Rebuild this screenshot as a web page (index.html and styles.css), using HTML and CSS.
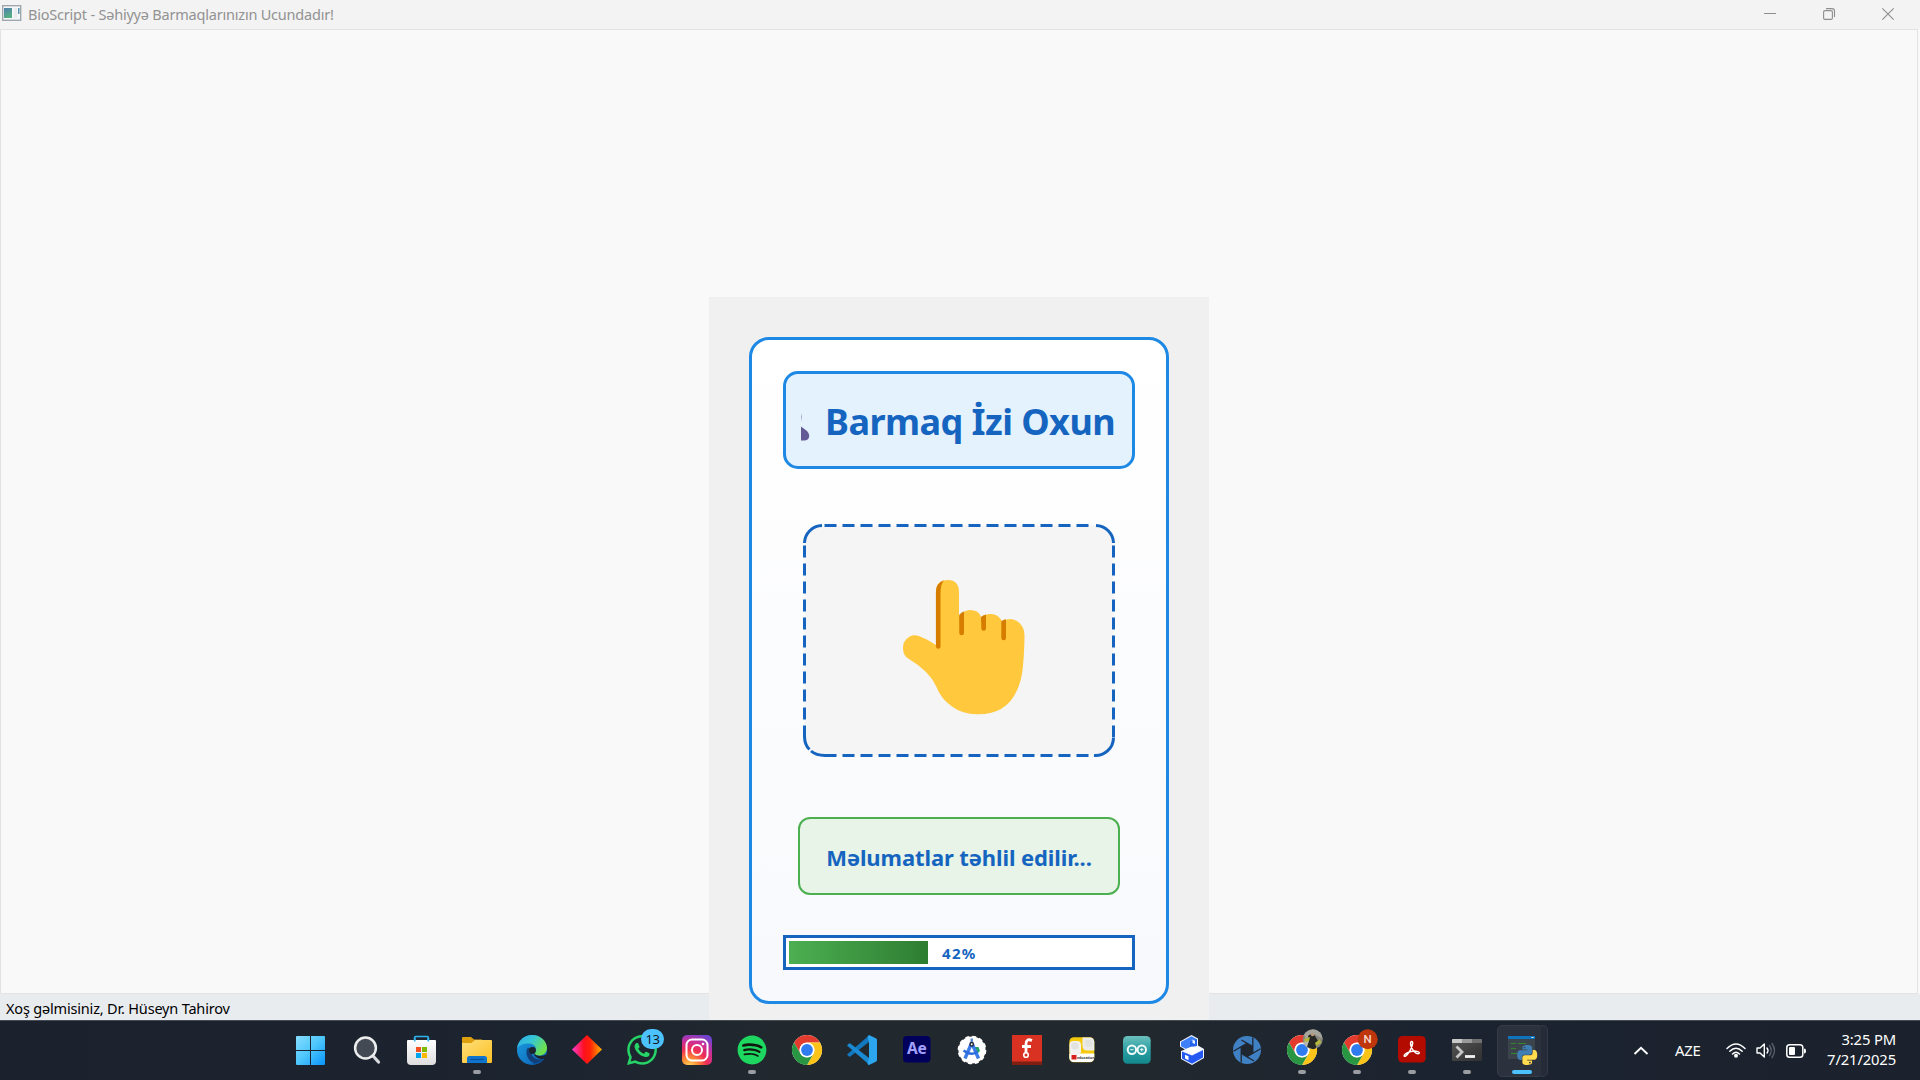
FILE: index.html
```html
<!DOCTYPE html>
<html lang="az">
<head>
<meta charset="utf-8">
<title>BioScript</title>
<link rel="stylesheet" href="styles.css">
</head>
<body>
<div class="desktop">
  <header class="titlebar">
    <svg class="app-icon" width="20" height="17" viewBox="0 0 20 17">
      <defs><linearGradient id="appg" x1="0" y1="0" x2="0.4" y2="1"><stop offset="0" stop-color="#4f7fae"/><stop offset="1" stop-color="#54b083"/></linearGradient></defs>
      <rect x=".7" y=".7" width="18" height="14.6" fill="#f4f6f8" stroke="#9aa3ab" stroke-width="1.3"/>
      <rect x="2" y="3" width="8" height="10" fill="url(#appg)"/>
      <rect x="12" y="3" width="3" height="10" fill="#e9ecef"/>
      <rect x="16" y="3" width="1.5" height="6" fill="#5695b0"/>
    </svg>
    <span class="app-title">BioScript - Səhiyyə Barmaqlarınızın Ucundadır!</span>
    <div class="window-controls">
      <svg width="12" height="12" viewBox="0 0 12 12"><path d="M0 5.5h12" stroke="#8e8e8e" fill="none"/></svg>
      <svg width="12" height="12" viewBox="0 0 12 12"><g fill="none" stroke="#8e8e8e" stroke-width="1.1"><rect x=".6" y="2.6" width="8.8" height="8.8" rx="1.4"/><path d="M3 .6h5.9a2.6 2.6 0 0 1 2.6 2.6V9"/></g></svg>
      <svg width="12" height="12" viewBox="0 0 12 12"><path d="M.3.3l11.4 11.4M11.7.3L.3 11.7" stroke="#8e8e8e" stroke-width="1.1" fill="none"/></svg>
    </div>
  </header>
  <main class="workspace"></main>
  <footer class="statusbar"><span class="welcome">Xoş gəlmisiniz, Dr. Hüseyn Tahirov</span></footer>

  <section class="dialog">
    <div class="card">
      <div class="heading">
        <div class="heading-clip">
          <svg class="glyph" width="10" height="30" viewBox="0 0 10 30"><path d="M0 0q1 4 0 9zM0 13.500l6 4.500q3.500 4 1.500 7.500q-1 2-4 2H0z" fill="#635994"/></svg>
          <span class="heading-text">Barmaq İzi Oxun</span>
        </div>
      </div>
      <div class="scan">
        <svg width="312" height="233" viewBox="0 0 312 233">
          <rect x="1.500" y="1.500" width="309" height="230" rx="19" fill="#f5f5f5"/>
          <g fill="none" stroke="#1565c0" stroke-width="3">
            <path d="M21.500 1.500H286M21.500 231.500H286" stroke-dasharray="12 6"/>
            <path d="M1.500 21.500V214M310.500 21.500V214" stroke-dasharray="12 6"/>
            <path d="M1.500 19A18 18 0 0 1 19 1.500M293 1.500A18 18 0 0 1 310.500 19M310.500 214A18 18 0 0 1 291 231.500M1.500 212Q1.500 221 6.500 225.500M8 227Q13 231.500 22 231.500"/>
          </g>
          <g transform="translate(-23 -14)">
            <path d="M156 139V82Q156 70 168 70Q178.700 70 179 82V106Q184 100 190 100Q199 100 201 107Q205 103.700 211 104Q218 104 222 111Q227 109 231 109Q239 110 243 118Q244.700 121 244.500 127Q244 151 242 164Q237 190 221 199Q211 204.500 197 204.300Q182 204 172 196.500Q161 189 156 176Q149 161 129 149Q123 146 123 138Q123 132 127 128.500Q132 123.500 139 126Q147 129 156 135Z" fill="#ffc83d"/>
            <path d="M164 70.200Q160.700 74 160.500 82V136.500a2.300 2.300 0 0 1-4.600 0V82Q156 73 164 70.200ZM179.200 105Q181 102 184 101.500V123a2.300 2.300 0 0 1-4.700 0ZM201 107Q203 105 206 104.700V118.500a2.300 2.300 0 0 1-4.700 0ZM221.300 111.500Q223 109.500 226 109.300V128a2.300 2.300 0 0 1-4.700 0Z" fill="#d67d00"/>
          </g>
        </svg>
      </div>
      <div class="state"><span class="state-text">Məlumatlar təhlil edilir...</span></div>
      <div class="progress">
        <div class="bar" style="width:139px"></div>
        <span class="percent">42%</span>
      </div>
    </div>
  </section>

  <nav class="taskbar">
    <svg class="defs" width="0" height="0">
      <defs>
        <linearGradient id="win" x1="0" y1="0" x2="1" y2="1"><stop offset="0" stop-color="#86deff"/><stop offset=".5" stop-color="#4cc6fb"/><stop offset="1" stop-color="#0793fa"/></linearGradient>
        <linearGradient id="bag" x1="0" y1="0" x2="0" y2="1"><stop offset="0" stop-color="#fff"/><stop offset="1" stop-color="#dedede"/></linearGradient>
        <linearGradient id="fold" x1="0" y1="0" x2="1" y2="1"><stop offset="0" stop-color="#ffe07a"/><stop offset="1" stop-color="#fbbf24"/></linearGradient>
        <linearGradient id="edge1" x1="0" y1="0" x2="1" y2=".5"><stop offset="0" stop-color="#2fa8ea"/><stop offset=".5" stop-color="#36c6d4"/><stop offset="1" stop-color="#6fe04d"/></linearGradient>
        <linearGradient id="edge2" x1="0" y1="0" x2="1" y2="1"><stop offset="0" stop-color="#1b9de2"/><stop offset="1" stop-color="#0c5fb3"/></linearGradient>
        <linearGradient id="dia"><stop offset="0" stop-color="#ff3ccf"/><stop offset=".4" stop-color="#ff1020"/><stop offset=".6" stop-color="#ff2008"/><stop offset="1" stop-color="#ffb000"/></linearGradient>
        <radialGradient id="insta" cx=".25" cy="1.05" r="1.150"><stop offset="0" stop-color="#ffd85c"/><stop offset=".25" stop-color="#fd8a35"/><stop offset=".5" stop-color="#f02f52"/><stop offset=".75" stop-color="#c92f9a"/><stop offset="1" stop-color="#6c44d0"/></radialGradient>
        <linearGradient id="ard" x1="0" y1="0" x2="0" y2="1"><stop offset="0" stop-color="#6cc0bd"/><stop offset=".5" stop-color="#2b9fa3"/><stop offset="1" stop-color="#12888e"/></linearGradient>
        <linearGradient id="term" x1="0" y1="0" x2="1" y2="1"><stop offset="0" stop-color="#555"/><stop offset="1" stop-color="#303030"/></linearGradient>
        <clipPath id="avatar"><circle cx="25.700" cy="4.300" r="10"/></clipPath>
        <g id="chrome">
          <circle cx="15" cy="15" r="15" fill="#fff"/>
          <path d="M2 7.500A15 15 0 0 1 28 7.500H15A7.500 7.500 0 0 0 8.500 18.750Z" fill="#e33b2e"/>
          <path d="M28 7.500A15 15 0 0 1 15 30L21.500 18.750A7.500 7.500 0 0 0 15 7.500Z" fill="#fcc419"/>
          <path d="M15 30A15 15 0 0 1 2 7.500L8.500 18.750A7.500 7.500 0 0 0 21.500 18.750Z" fill="#289642"/>
          <circle cx="15" cy="15" r="7.300" fill="#fff"/><circle cx="15" cy="15" r="5.900" fill="#2f7bf0"/>
        </g>
      </defs>
    </svg>
    <div class="apps">
      <div class="app"><svg viewBox="0 0 30 30"><path d="M-1 2a1 1 0 0 1 1-1H13V15H-1ZM14 1H27a1 1 0 0 1 1 1V15H14ZM-1 16H13V30H0a1 1 0 0 1-1-1ZM14 16H28V29a1 1 0 0 1-1 1H14Z" fill="url(#win)"/></svg></div>
      <div class="app"><svg viewBox="0 0 30 30"><path d="M21.500 21.500L26.500 27" stroke="#d8dade" stroke-width="3.200" stroke-linecap="round"/><circle cx="13.500" cy="13" r="10.400" fill="#434a54" stroke="#eceded" stroke-width="2.500"/></svg></div>
      <div class="app"><svg viewBox="0 0 30 30"><path d="M7.700 8V2.500a1 1 0 0 1 1-1H20.300a1 1 0 0 1 1 1V8" fill="none" stroke="#2fb3ee" stroke-width="1.700"/><path d="M0 6a1 1 0 0 1 1-1H28a1 1 0 0 1 1 1V26a4 4 0 0 1-4 4H4a4 4 0 0 1-4-4Z" fill="url(#bag)"/><path d="M7.700 6.500V3M21.300 6.500V3" stroke="#2fb3ee" stroke-width="1.700"/><path d="M9 12h5v5H9z" fill="#f25022"/><path d="M15 12h5v5h-5z" fill="#7fba00"/><path d="M9 18h5v5H9z" fill="#00a4ef"/><path d="M15 18h5v5h-5z" fill="#ffb900"/></svg></div>
      <div class="app"><svg viewBox="0 0 30 30"><path d="M0 3a1 1 0 0 1 1-1H9L12 4.500H20V10H0Z" fill="#dfa010"/><path d="M0 8H9.500L13 5H29a1 1 0 0 1 1 1V27a1 1 0 0 1-1 1H1a1 1 0 0 1-1-1Z" fill="url(#fold)"/><path d="M5 28V23.500a2.500 2.500 0 0 1 2.500-2.500H22.500a2.500 2.500 0 0 1 2.500 2.500V28Z" fill="#0f74cb"/><path d="M8.500 24.500H21.500" stroke="#0a4f9c" stroke-width="1.200"/></svg><i class="run"></i></div>
      <div class="app"><svg viewBox="0 0 30 30"><circle cx="15" cy="15" r="15" fill="url(#edge2)"/><path d="M0 13.500C1 5 8 0 15 0C24 0 30 6.500 30 13C30 18 26 20.500 22.500 20.500C19.500 20.500 17.500 19.500 17.500 18.500C17.500 17.500 19 17 19 14.500C19 11 16 8.500 11.500 8.500C6 8.500 1.500 10.500 0 13.500Z" fill="url(#edge1)"/><path d="M11 12.500C8 16 9.500 23 14 26.500C18 29.500 23 29 27.500 23.500C24 25 20 25 17 22.500C14 20 14 17 15 14.500Z" fill="#123f78"/><path d="M18 18.500C18 21 24 22 29.300 19.500L31 21L27.500 23.500C23 25 19 23 17 20Z" fill="#1c232d"/><circle cx="15.500" cy="15.500" r="3.400" fill="#1c232d"/><path d="M27.500 23.500C24 28.500 18 30 13 29Q21 28 27.500 23.500Z" fill="#0b4f9d"/></svg></div>
      <div class="app"><svg viewBox="0 0 30 30"><path d="M15 0L30 14.500L15 29L0 14.500Z" fill="url(#dia)"/></svg></div>
      <div class="app"><svg viewBox="0 0 24 24"><path fill="#25d366" d="M17.472 14.382c-.297-.149-1.758-.867-2.03-.967-.273-.099-.471-.148-.67.15-.197.297-.767.966-.94 1.164-.173.199-.347.223-.644.075-.297-.15-1.255-.463-2.39-1.475-.883-.788-1.48-1.761-1.653-2.059-.173-.297-.018-.458.13-.606.134-.133.298-.347.446-.52.149-.174.198-.298.298-.497.099-.198.05-.371-.025-.52-.075-.149-.669-1.612-.916-2.207-.242-.579-.487-.5-.669-.51-.173-.008-.371-.01-.57-.01-.198 0-.52.074-.792.372-.272.297-1.040 1.016-1.040 2.479 0 1.462 1.065 2.875 1.213 3.074.149.198 2.096 3.200 5.077 4.487.709.306 1.262.489 1.694.625.712.227 1.360.195 1.871.118.571-.085 1.758-.719 2.006-1.413.248-.694.248-1.289.173-1.413-.074-.124-.272-.198-.57-.347m-5.421 7.403h-.004a9.870 9.870 0 01-5.031-1.378l-.361-.214-3.741.982.998-3.648-.235-.374a9.860 9.860 0 01-1.510-5.260c.001-5.450 4.436-9.884 9.888-9.884 2.640 0 5.122 1.030 6.988 2.898a9.825 9.825 0 012.893 6.994c-.003 5.450-4.437 9.884-9.885 9.884m8.413-18.297A11.815 11.815 0 0012.050 0C5.495 0 .16 5.335.157 11.892c0 2.096.547 4.142 1.588 5.945L.057 24l6.305-1.654a11.882 11.882 0 005.683 1.448h.005c6.554 0 11.890-5.335 11.893-11.893a11.821 11.821 0 00-3.480-8.413z"/></svg><span class="badge">13</span></div>
      <div class="app"><svg viewBox="0 0 30 30"><rect width="30" height="30" rx="5" fill="url(#insta)"/><g fill="none" stroke="#fff" stroke-width="2"><rect x="4.500" y="4.500" width="21" height="21" rx="5.500"/><circle cx="15" cy="15" r="5"/></g><circle cx="21" cy="9" r="1.300" fill="#fff"/></svg></div>
      <div class="app"><svg viewBox="-.5 -.5 25 25"><circle cx="12" cy="12" r="11" fill="#11160f"/><path fill="#1ed760" d="M12 0C5.400 0 0 5.400 0 12s5.400 12 12 12 12-5.400 12-12S18.660 0 12 0zm5.521 17.340c-.24.359-.66.48-1.021.24-2.820-1.740-6.360-2.101-10.561-1.141-.418.122-.779-.179-.899-.539-.12-.421.18-.78.54-.9 4.560-1.021 8.520-.6 11.640 1.320.42.18.479.659.301 1.020zm1.440-3.300c-.301.42-.841.6-1.262.3-3.239-1.980-8.159-2.580-11.939-1.380-.479.12-1.020-.12-1.140-.6-.12-.48.12-1.021.6-1.141C9.600 9.900 15 10.561 18.720 12.840c.361.181.54.78.241 1.200zm.12-3.360C15.240 8.400 8.820 8.160 5.160 9.301c-.6.179-1.200-.181-1.380-.721-.18-.601.18-1.200.72-1.381 4.260-1.260 11.280-1.020 15.721 1.621.539.3.719 1.020.419 1.560-.299.421-1.020.599-1.559.3z"/></svg><i class="run"></i></div>
      <div class="app"><svg viewBox="0 0 30 30"><use href="#chrome"/></svg></div>
      <div class="app"><svg viewBox="0 0 30 30"><path d="M0 19.500L2 21.500Q2.600 22 3.300 21.500L22 7V0.500Z" fill="#1279c0"/><path d="M0 10.500L2 8.500Q2.600 8 3.300 8.500L22 23V29.500Z" fill="#1a8ad3"/><path d="M22 0L28.800 3.200Q30 3.800 30 5V25Q30 26.200 28.800 26.800L22 30Q21 30 20.500 28.500L22 23V7L20.500 1.500Z" fill="#2ba6ef"/></svg></div>
      <div class="app"><svg viewBox="0 0 30 30"><rect x="1" y="1" width="27.500" height="26.500" rx="4" fill="#00005b"/><text x="14.700" y="18.500" class="ae">Ae</text></svg></div>
      <div class="app"><svg viewBox="0 0 30 30"><circle cx="15" cy="15" r="13.600" fill="#fff" stroke="#fff" stroke-width="1.500" stroke-dasharray="4 3.100"/><path d="M17 12h4.500l1.500 4-3 3z" fill="#20a464"/><path d="M8 23.500L14 9.500M21.500 23.500L15.500 9.500" stroke="#3c7be8" stroke-width="3.400"/><path d="M6.500 15.500Q15 21.500 20.500 16.500" stroke="#2b6cdd" stroke-width="2.300" fill="none"/><path d="M14.700 3.500v4" stroke="#5482d0" stroke-width="2.400"/><circle cx="14.700" cy="9.200" r="1.700" fill="#fff" stroke="#222b3b" stroke-width="1.500"/></svg></div>
      <div class="app"><svg viewBox="0 0 30 30"><path d="M0 0H30V30H0Z" fill="#d93222"/><path d="M0 26.500H30V30H0Z" fill="#7f1f12"/><path d="M20 5.500Q14 3 14 9V18M10 11.500H19" fill="none" stroke="#fff" stroke-width="2.800"/><circle cx="14" cy="20" r="2.300" fill="#d93222" stroke="#fff" stroke-width="1.600"/></svg></div>
      <div class="app"><svg viewBox="0 0 30 30"><rect x="2.300" y="2.300" width="25" height="25" rx="4.500" fill="#f5c90c"/><path d="M2.300 18.500H27.300V22.500a4.500 4.500 0 0 1-4.500 4.500H6.800a4.500 4.500 0 0 1-4.500-4.500Z" fill="#fff"/><rect x="2.500" y="6" width="11.500" height="14" rx="4" fill="#f1f1ef"/><path d="M15.500 2.500H23a4.300 4.300 0 0 1 4.300 4.300V15.500H20a4.500 4.500 0 0 1-4.500-4.500Z" fill="#ebebe8"/><path d="M4.500 9q3-4 7 0v4q-3 3-7 0zM18 5.500q4-2 7 1v4q-3 3-7 0z" fill="#e2e2df"/><path d="M4.500 20H9.500V24.500H4.500Z" fill="#d8201c"/><text x="10" y="23.700" class="lego">education</text></svg></div>
      <div class="app"><svg viewBox="0 0 30 30"><rect x="1" y="1" width="27.700" height="27.700" rx="4.500" fill="url(#ard)"/><g fill="none" stroke="#f2fafa" stroke-width="2"><circle cx="9.900" cy="14.700" r="4.200"/><circle cx="19.800" cy="14.700" r="4.200"/></g><path d="M8.200 14.700h3.400M18 14.700h3.600M19.800 13v3.500" stroke="#fff" stroke-width=".9"/></svg></div>
      <div class="app"><svg viewBox="0 0 30 30"><path d="M3 6.500L14.500 0L21 3.500V10.500L27 14V23L15 30L4 24V16L8 14.500L3 11.500Z" fill="#f4f7ff"/><path d="M4 7L14.500 1.200L20 4.300V10.500L15.500 11.500L9 14L4 11.200Z" fill="#3d80f8"/><path d="M13 6.500L20 4.300V11L13 12Z" fill="#2563ee"/><path d="M15.500 4.500L18 5.800V9L15.500 8Z" fill="#e9f0ff"/><path d="M7.500 14.500L15 11.500L23 15.500L15.500 19Z" fill="#fff"/><path d="M5 16.500L15 20.500L26 15V22.500L15 28.800L5 23.500Z" fill="#2458f3"/><path d="M8 19.800L11.500 21.300V25.300L8 23.500Z" fill="#fff"/></svg></div>
      <div class="app"><svg viewBox="0 0 30 30"><circle cx="15" cy="15" r="14" fill="#4081c4"/><path d="M15 8.300L20.800 11.650V18.350L15 21.700L9.200 18.350V11.650Z" fill="#20262f"/><g stroke="#20262f" stroke-width="1.300"><path d="M20.800 11.650L9.500 5"/><path d="M20.800 18.350V2.500"/><path d="M15 21.700L28.500 13.700"/><path d="M9.200 18.350L22 26"/><path d="M9.200 11.650V27.500"/><path d="M15 8.300L1.500 16.300"/></g></svg></div>
      <div class="app"><svg viewBox="0 0 30 30"><use href="#chrome"/><g clip-path="url(#avatar)"><path d="M15-6H36V15H15Z" fill="#85867c"/><path d="M17-1Q22-6 29-6L36-3V4L27-1L19 5Z" fill="#a5a59c"/><path d="M15 8L21 4L24 8L21 15Z" fill="#b5b7af"/><path d="M21 1Q25-3 28 1L31 6L28 15L20 12L22 6Z" fill="#252823"/><path d="M17 4L23 2L22 6L18 7ZM28 8L33 4L34 8L29 11Z" fill="#b6b83b"/><circle cx="25.500" cy="-.5" r="1.800" fill="#b99b7c"/></g></svg><i class="run"></i></div>
      <div class="app"><svg viewBox="0 0 30 30"><use href="#chrome"/><circle cx="25.700" cy="4.300" r="10" fill="#bf360c"/><text x="25.700" y="8.300" class="initial">N</text></svg><i class="run"></i></div>
      <div class="app"><svg viewBox="0 0 30 30"><rect x="1" y="1" width="27.700" height="26.500" rx="4.500" fill="#b30b00"/><path d="M14.700 6.500C12.800 6.500 13.500 10.500 15 13.500C17 17.500 20.500 19.500 22 18.500C23.500 16.500 18 15.500 14 16.500C10 17.500 6.500 19.500 7.200 21C8.500 22.500 12 18 13.800 14C15.500 10.500 16.500 6.500 14.700 6.500Z" fill="none" stroke="#fff" stroke-width="1.500"/></svg><i class="run"></i></div>
      <div class="app"><svg viewBox="0 0 30 30"><rect y="4" width="30" height="22" rx="1" fill="url(#term)"/><path d="M0 5a1 1 0 0 1 1-1H10V8H0Z" fill="#c9c9c9"/><path d="M10 4H20V8H10Z" fill="#999"/><path d="M20 4H29a1 1 0 0 1 1 1V8H20Z" fill="#717171"/><path d="M4.500 11.500L10 17L4.500 22.500" stroke="#c8c8c8" stroke-width="2.800" fill="none"/><path d="M13 21.500H23" stroke="#f2f2f2" stroke-width="2.800"/></svg><i class="run"></i></div>
      <div class="app active"><svg viewBox="0 0 30 30"><path d="M1 1H28V24H1Z" fill="#3c444b"/><path d="M1 1H28V4H1Z" fill="#0e72bd"/><path d="M24.500 2.500h2" stroke="#d9e8f3"/><path d="M4 8.500H9M11 8.500H19M4 13.500H9M4 18.500H12" stroke="#36852e" stroke-width="1.200"/><g transform="translate(8.800 8.600) scale(.715)"><path fill="#3f7fb5" d="M15.885 2.100c-7.100 0-6.651 3.070-6.651 3.070v3.190h6.752v1H6.545S2 8.800 2 16.005s4.013 6.912 4.013 6.912H8.330v-3.361s-.13-4.013 3.900-4.013h6.762s3.772.06 3.772-3.652V5.800s.572-3.712-6.842-3.712zm-3.732 2.137a1.214 1.214 0 1 1-1.183 1.244v-.02a1.214 1.214 0 0 1 1.214-1.214z"/><path fill="#ffdb4d" d="M16.085 29.910c7.100 0 6.651-3.080 6.651-3.080v-3.180h-6.751v-1h9.470S30 23.158 30 15.995s-4.013-6.912-4.013-6.912H23.640V12.400s.13 4.013-3.900 4.013h-6.765S9.200 16.356 9.200 20.068V26.200s-.572 3.712 6.842 3.712h.04zm3.732-2.147A1.214 1.214 0 1 1 21 26.519v.03a1.214 1.214 0 0 1-1.214 1.214z"/></g></svg><i class="run"></i></div>
    </div>
    <div class="tray">
      <svg class="chevron" width="16" height="10" viewBox="0 0 16 10"><path d="M1.500 8L8 1.800L14.500 8" fill="none" stroke="#fff" stroke-width="1.900"/></svg>
      <span class="lang">AZE</span>
      <svg class="wifi" width="20" height="15" viewBox="0 0 20 15"><g fill="none" stroke="#fff" stroke-width="1.500" stroke-linecap="round"><path d="M1 5.500Q10-3.500 19 5.500M3.800 8.300Q10 2 16.200 8.300M6.500 11Q10 7.500 13.500 11"/></g><circle cx="10" cy="12.700" r="2" fill="#fff"/></svg>
      <svg class="sound" width="20" height="17" viewBox="0 0 20 17"><g fill="none" stroke-linejoin="round" stroke-linecap="round" stroke-width="1.400"><path d="M1 6V11H4L8.300 15V2L4 6Z" stroke="#fff"/><path d="M11 6Q13 8.500 11 11" stroke="#fff"/><path d="M13.500 3.500Q17 8.500 13.500 13.500M16 1.500Q21 8.500 16 15.500" stroke="#59606a"/></g></svg>
      <svg class="battery" width="20" height="14" viewBox="0 0 20 14"><rect x=".8" y=".8" width="16" height="12.400" rx="2.800" fill="none" stroke="#fff" stroke-width="1.500"/><rect x="3" y="3" width="6" height="8" rx="1" fill="#fff"/><path d="M18 4.500a2 2 0 0 1 2 2v1a2 2 0 0 1-2 2z" fill="#fff"/></svg>
      <div class="clock"><span>3:25 PM</span><span>7/21/2025</span></div>
    </div>
  </nav>
</div>
</body>
</html>
```
FILE: styles.css
```css
* { box-sizing: border-box; }
body { margin: 0; font-family: "Noto Sans", "Open Sans", sans-serif; background: #f9f9f9; overflow: hidden; }
svg { display: block; flex: none; overflow: visible; }
.desktop { position: relative; display: flex; flex-direction: column; width: 1920px; height: 1080px; }

.titlebar { display: flex; align-items: center; height: 29px; padding: 0 26px 2px 2px; background: #f3f3f3; }
.app-icon { margin-right: 6px; }
.app-title { font-size: 14.5px; letter-spacing: -0.21px; color: #929292; white-space: nowrap; }
.window-controls { display: flex; gap: 47px; margin-left: auto; }
.workspace { flex: 1; background: #f9f9f9; border: 1px solid #e3e3e3; margin-right: 2px; }
.statusbar { display: flex; align-items: center; height: 26px; padding: 2px 0 0 6px; background: #e9ecef; color: #000; }
.welcome { font-size: 14.5px; letter-spacing: -0.18px; white-space: nowrap; }

.dialog { position: absolute; left: 709px; top: 297px; width: 500px; height: 723px; padding: 40px; background: #f0f0f0; }
.card { display: flex; flex-direction: column; align-items: center; height: 667px; padding: 31px; border: 3px solid #1e88e5; border-radius: 20px; background: linear-gradient(#fff, #f8f9fc); color: #1565c0; font-weight: 700; }
.heading { width: 352px; height: 98px; padding: 15px; border: 3px solid #1e88e5; border-radius: 15px; background: #e3f2fd; }
.heading-clip { display: flex; align-items: center; height: 62px; white-space: nowrap; }
.glyph { align-self: flex-start; margin-top: 24px; }
.heading-text { margin-left: 14px; padding-top: 3px; font-size: 36px; letter-spacing: -0.55px; }
.scan { margin-top: 55px; }
.state { display: flex; align-items: center; justify-content: center; width: 322px; height: 78px; margin-top: 60px; padding-top: 2px; border: 2px solid #4caf50; border-radius: 12px; background: #e8f4e8; }
.state-text { font-size: 22px; letter-spacing: -0.1px; white-space: nowrap; }
.progress { display: flex; align-items: center; width: 352px; height: 35px; margin-top: 40px; padding: 3px; border: 3px solid #1565c0; background: #fff; }
.bar { height: 23px; background: linear-gradient(90deg, #4caf50, #2e7d32); }
.percent { margin-left: 14px; font-size: 15px; letter-spacing: 1.3px; }

.taskbar { display: flex; align-items: flex-start; height: 60px; border-top: 1px solid #454c53; background: linear-gradient(90deg, #1b222e 0, #1c2430 30%, #22292e 42%, #22292e 58%, #1b2330 75%, #1b222d); }
.defs { position: absolute; }
.apps { display: flex; gap: 25px; margin: 14px 0 0 297px; }
.app { position: relative; width: 30px; height: 30px; }
.app > svg { position: relative; width: 30px; height: 30px; }
.run { position: absolute; left: 11px; top: 35px; width: 8px; height: 4px; border-radius: 2px; background: #9a9da2; }
.badge { position: absolute; left: 14px; top: -6px; width: 23px; height: 20px; border-radius: 10px; background: #4cc2ff; color: #10161d; font-size: 13px; line-height: 20px; text-align: center; letter-spacing: -0.5px; }
.active::before { content: ""; position: absolute; left: -10px; top: -10px; width: 44px; height: 50px; border: 1px solid #363d47; border-radius: 5px; background: #2b323d; }
.active::after { content: ""; position: absolute; left: 34px; top: -10px; width: 6px; height: 50px; border: 1px solid #323944; border-left: 0; border-radius: 0 5px 5px 0; background: #252c37; }
.active .run { left: 5px; width: 20px; background: #4cc2ff; }
.ae { font: 700 15.5px "Noto Sans", sans-serif; letter-spacing: -0.3px; fill: #a4a0ff; text-anchor: middle; }
.lego { font: 700 3.5px "Noto Sans", sans-serif; fill: #333; }
.initial { font: 500 11.5px Roboto, sans-serif; fill: #f8d9cd; text-anchor: middle; }

.tray { display: flex; align-items: center; height: 59px; margin-left: auto; padding-right: 24px; color: #fff; font-size: 14.8px; letter-spacing: -0.15px; }
.lang { width: 27px; margin: 0 24px 2px 26px; }
.sound { margin: 0 10px; }
.clock { display: flex; flex-direction: column; align-items: flex-end; width: 90px; margin-bottom: 3px; line-height: 20px; }
```
